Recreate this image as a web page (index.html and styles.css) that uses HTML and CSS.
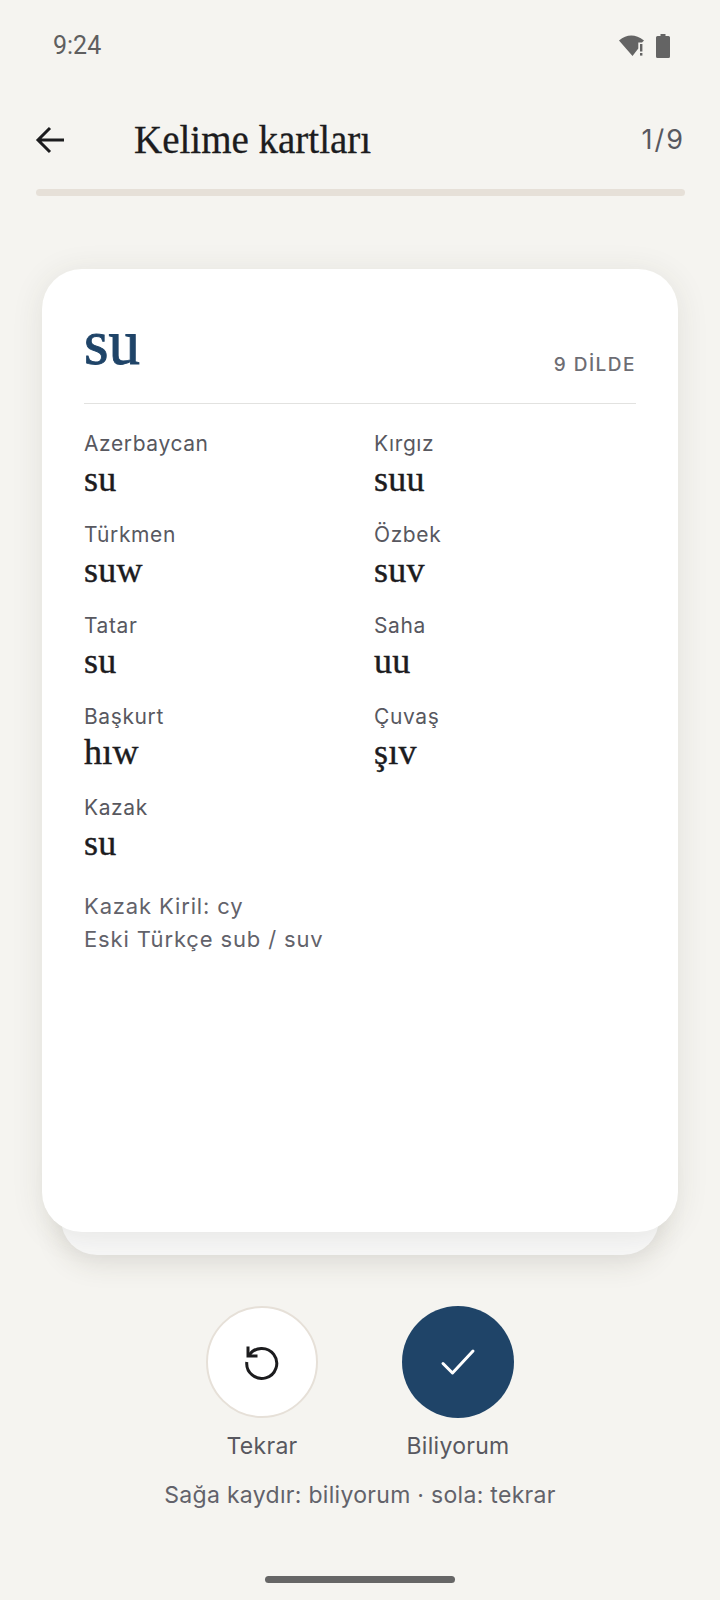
FILE: index.html
```html
<!DOCTYPE html>
<html lang="tr">
<head>
    <meta charset="UTF-8">
    <title>Kelime kartları</title>
    <meta name="viewport" content="width=device-width, initial-scale=1">
    <link rel="stylesheet" href="styles.css">
</head>
<body>
    <div class="status-bar">
        <span class="clock">9:24</span>
        <div class="status-icons">
            <svg class="wifi" width="26" height="23" viewBox="0 0 26 23">
                <path d="M0 6.500Q12-3.500 25 6.500L23 8.500H19.300V14.500L13.500 22z" fill="#646464"/>
                <rect x="21" y="10" width="2.400" height="7.500" fill="#646464"/>
                <rect x="21" y="19" width="2.400" height="2.600" fill="#646464"/>
            </svg>
            <svg class="battery" width="14" height="24" viewBox="0 0 14 24">
                <path d="M4.500 0h5v2h3a1.500 1.500 0 0 1 1.500 1.500v19a1.500 1.500 0 0 1-1.500 1.500h-11A1.500 1.500 0 0 1 0 22.500v-19A1.500 1.500 0 0 1 1.500 2h3z" fill="#646464"/>
            </svg>
        </div>
    </div>

    <header class="top-bar">
        <svg class="back" width="30" height="28" viewBox="0 0 30 28">
            <path d="M29 14H3M15 2L3 14l12 12" fill="none" stroke="#1c1c1e" stroke-width="3"/>
        </svg>
        <h1 class="title">Kelime kartları</h1>
        <span class="counter">1/9</span>
    </header>
    <div class="progress"></div>

    <main class="stack">
        <div class="card-back"></div>
        <section class="card">
            <div class="card-head">
                <div class="word">su</div>
                <div class="lang-count">9 DİLDE</div>
            </div>
            <div class="lang-grid">
                <div class="lang"><div class="lang-name">Azerbaycan</div><div class="lang-word">su</div></div>
                <div class="lang"><div class="lang-name">Kırgız</div><div class="lang-word">suu</div></div>
                <div class="lang"><div class="lang-name">Türkmen</div><div class="lang-word">suw</div></div>
                <div class="lang"><div class="lang-name">Özbek</div><div class="lang-word">suv</div></div>
                <div class="lang"><div class="lang-name">Tatar</div><div class="lang-word">su</div></div>
                <div class="lang"><div class="lang-name">Saha</div><div class="lang-word">uu</div></div>
                <div class="lang"><div class="lang-name">Başkurt</div><div class="lang-word">hıw</div></div>
                <div class="lang"><div class="lang-name">Çuvaş</div><div class="lang-word">şıv</div></div>
                <div class="lang"><div class="lang-name">Kazak</div><div class="lang-word">su</div></div>
            </div>
            <div class="notes">
                <div>Kazak Kiril: cy</div>
                <div>Eski Türkçe sub / suv</div>
            </div>
        </section>
    </main>

    <div class="actions">
        <div class="action">
            <div class="circle circle-again">
                <svg width="40" height="40" viewBox="0 0 40 40">
                    <path d="M7 13.500A15 15 0 1 1 4.800 20" fill="none" stroke="#1c1c1e" stroke-width="3"/>
                    <path d="M6 4.500v9.500h9.500" fill="none" stroke="#1c1c1e" stroke-width="3"/>
                </svg>
            </div>
            <span class="action-label">Tekrar</span>
        </div>
        <div class="action">
            <div class="circle circle-known">
                <svg width="40" height="40" viewBox="0 0 40 40">
                    <path d="M5 21.500l9.500 9.500L35 9" fill="none" stroke="#fff" stroke-width="3" stroke-linecap="round" stroke-linejoin="round"/>
                </svg>
            </div>
            <span class="action-label">Biliyorum</span>
        </div>
    </div>
    <p class="hint">Sağa kaydır: biliyorum · sola: tekrar</p>
    <div class="home-bar"></div>
</body>
</html>
```

FILE: styles.css
```css
* {
    box-sizing: border-box;
}

body {
    margin: 0;
    height: 1600px;
    overflow: hidden;
    background: #f5f4f0;
    color: #1c1c1e;
    font-family: Inter, "Noto Sans", sans-serif;
    display: flex;
    flex-direction: column;
}

.status-bar {
    height: 92px;
    padding: 32px 50px 0 53px;
    display: flex;
    justify-content: space-between;
    align-items: flex-start;
}

.clock {
    font-family: Roboto, sans-serif;
    font-size: 25px;
    line-height: 28px;
    color: #5f5f5f;
}

.status-icons {
    display: flex;
    gap: 11px;
    padding-top: 2px;
}

.top-bar {
    height: 95px;
    padding: 0 35px;
    display: flex;
    align-items: center;
}

.back {
    flex: none;
}

.title {
    flex: 1;
    margin: 0 0 0 69px;
    font-family: "Liberation Serif", serif;
    font-size: 39px;
    font-weight: 400;
    -webkit-text-stroke: 0.3px #1c1c1e;
}

.counter {
    font-family: Inter, sans-serif;
    font-size: 27px;
    letter-spacing: 2px;
    color: #58585f;
}

.progress {
    height: 7px;
    margin: 2px 35px 0 36px;
    border-radius: 4px;
    background: #e6e0d8;
}

.stack {
    position: relative;
    margin: 73px 42px 0;
    padding-bottom: 23px;
}

.card-back {
    position: absolute;
    left: 19px;
    right: 19px;
    bottom: 0;
    height: 100px;
    border-radius: 0 0 36px 36px;
    background: #f8f8f8;
    box-shadow: 0 8px 28px rgba(60, 55, 40, 0.13);
}

.card {
    position: relative;
    height: 963px;
    padding: 40px 42px;
    border-radius: 40px;
    background: #fff;
    box-shadow: 0 4px 32px rgba(60, 55, 40, 0.10);
}

.card-head {
    height: 95px;
    display: flex;
    justify-content: space-between;
    align-items: flex-end;
    padding-bottom: 27px;
    border-bottom: 1px solid #e2e2e0;
}

.word {
    margin-top: 4px;
    font-family: "Liberation Serif", serif;
    font-size: 63px;
    line-height: 60px;
    color: #1f4468;
    align-self: flex-start;
    -webkit-text-stroke: 0.9px #1f4468;
}

.lang-count {
    font-size: 19px;
    font-weight: 500;
    letter-spacing: 1.500px;
    color: #6d6d73;
}

.lang-grid {
    margin-top: 26px;
    display: grid;
    grid-template-columns: 290px 1fr;
    row-gap: 11px;
}

.lang {
    height: 80px;
}

.lang-name {
    font-size: 21px;
    line-height: 28px;
    letter-spacing: 0.600px;
    color: #58585f;
}

.lang-word {
    font-family: "Liberation Serif", serif;
    font-size: 36px;
    line-height: 42px;
    letter-spacing: 0.300px;
    -webkit-text-stroke: 0.4px #1c1c1e;
}

.notes {
    margin-top: 16px;
    font-size: 22px;
    line-height: 33px;
    letter-spacing: 0.850px;
    color: #62626a;
}

.actions {
    margin-top: 51px;
    display: flex;
    justify-content: center;
    gap: 60px;
}

.action {
    width: 136px;
    display: flex;
    flex-direction: column;
    align-items: center;
    gap: 14px;
}

.circle {
    width: 112px;
    height: 112px;
    border-radius: 50%;
    display: flex;
    align-items: center;
    justify-content: center;
}

.circle-again {
    background: #fff;
    border: 2px solid #e6e0d8;
}

.circle-known {
    background: #1f4468;
}

.action-label {
    font-size: 23px;
    line-height: 28px;
    letter-spacing: 0.300px;
    color: #58585f;
}

.hint {
    margin: 20px 0 0;
    text-align: center;
    font-size: 23px;
    line-height: 30px;
    letter-spacing: 0.300px;
    color: #62626a;
}

.home-bar {
    width: 190px;
    height: 7px;
    margin: 66px auto 0;
    border-radius: 4px;
    background: #666;
}
```
